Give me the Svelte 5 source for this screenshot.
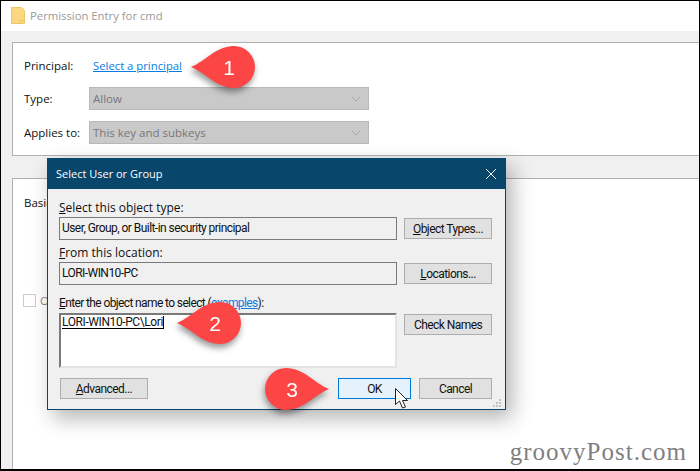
<script lang="ts">
  // Permission Entry dialog with the Select User or Group dialog over it.
  const callouts = [
    { n: 1, x: 190, y: 45, flip: false },
    { n: 2, x: 176, y: 301, flip: false },
    { n: 3, x: 264, y: 367, flip: true }
  ];
</script>

<div class="frame">
  <header class="titlebar">
    <svg class="folder" width="14" height="17" viewBox="0 0 14 17">
      <path d="M.5 .5h10l3 3v13H.5z" fill="#fbd87f" stroke="#ecc76c" />
      <path d="M9.500 16.500v-3h4" fill="none" stroke="#ecc76c" />
    </svg>
    <span>Permission Entry for cmd</span>
  </header>

  <main class="body">
    <section class="panel top">
      <div class="row first"><span class="lbl">Principal:</span><a href="#p">Select a principal</a></div>
      <div class="row"><span class="lbl">Type:</span><div class="combo">Allow{@render chevron()}</div></div>
      <div class="row"><span class="lbl">Applies to:</span><div class="combo">This key and subkeys{@render chevron()}</div></div>
    </section>
    <section class="panel lower">
      <div>Basic permissions:</div>
      <div class="check"><b></b>Only apply</div>
    </section>
  </main>

  <div class="dialog">
    <div class="dlg-title">
      <span>Select User or Group</span>
      <svg width="10" height="10" viewBox="0 0 10 10"><path d="M0 0l10 10M10 0L0 10" stroke="#fff" fill="none" /></svg>
    </div>
    <div class="dlg-body">
      <div class="fieldlbl"><u>S</u>elect this object type:</div>
      <div class="line">
        <div class="field">User, Group, or Built-in security principal</div>
        <button><u>O</u>bject Types...</button>
      </div>
      <div class="fieldlbl"><u>F</u>rom this location:</div>
      <div class="line second">
        <div class="field">LORI-WIN10-PC</div>
        <button><u>L</u>ocations...</button>
      </div>
      <div class="fieldlbl narrow"><u>E</u>nter the object name to select (<a href="#e">examples</a>):</div>
      <div class="line">
        <div class="area"><span class="typed">LORI-WIN10-PC\Lori</span></div>
        <button>Check Names</button>
      </div>
      <div class="actions">
        <button class="adv"><u>A</u>dvanced...</button>
        <button class="ok">OK</button>
        <button class="cancel">Cancel</button>
      </div>
    </div>
    <svg class="grip" width="9" height="8" viewBox="0 0 9 8" fill="#c4c4c4">
      <rect x="6" y="0" width="2" height="2" /><rect x="3" y="3" width="2" height="2" /><rect x="6" y="3" width="2" height="2" />
      <rect x="0" y="6" width="2" height="2" /><rect x="3" y="6" width="2" height="2" /><rect x="6" y="6" width="2" height="2" />
    </svg>
  </div>

  {#each callouts as c}
    <div class="callout" class:flip={c.flip} style="left: {c.x}px; top: {c.y}px">
      <svg width="64" height="42" viewBox="0 0 64 42">
        <path d="M0 21C15 15 25 0 43 0a21 21 0 0 1 0 42C25 42 15 27 0 21z" fill="#fc4646" />
      </svg>
      <span>{c.n}</span>
    </div>
  {/each}

  <svg class="cursor" width="13" height="21" viewBox="0 0 13 21">
    <path d="M.5 .5v16l4-3.500 3 7 3-1-3-6.500h5z" fill="#fff" stroke="#222" />
  </svg>

  <div class="brand">groovyPost.com</div>
</div>

{#snippet chevron()}
  <svg class="chev" width="10" height="6" viewBox="0 0 10 6"><path d="M1 1l4 4 4-4" fill="none" stroke="#aaa" /></svg>
{/snippet}

<style>
  :global(body) {
    margin: 0;
    background: #fff;
  }
  .frame {
    position: relative;
    width: 700px;
    height: 471px;
    box-sizing: border-box;
    border: 1px solid #000;
    border-bottom-width: 2px;
    overflow: hidden;
    font: 11.5px "Open Sans", "Liberation Sans", sans-serif;
    color: #111;
    background: #fff;
  }
  .titlebar {
    height: 30px;
    display: flex;
    align-items: center;
    gap: 5px;
    padding: 0 0 1px 10px;
    box-sizing: border-box;
    font-size: 11.3px;
    color: #999;
  }
  .body {
    background: #f0f0f0;
    height: 438px;
    padding: 11px 0 0 11px;
    box-sizing: border-box;
  }
  .panel {
    background: #fff;
    border: 1px solid #b0b0b0;
    border-right: 0;
    box-sizing: border-box;
  }
  .top {
    height: 114px;
    padding: 12px 0 0 11px;
    display: flex;
    flex-direction: column;
    gap: 11px;
    margin-bottom: 22px;
  }
  .row {
    display: flex;
    align-items: center;
    height: 23px;
  }
  .row.first {
    height: 21px;
  }
  .lbl {
    width: 65px;
  }
  .row a {
    color: #0a7ce0;
    padding-left: 4px;
    font-size: 11.3px;
  }
  .combo {
    width: 280px;
    height: 23px;
    box-sizing: border-box;
    background: #c9c9c9;
    border: 1px solid #b8b8b8;
    padding: 0 4px 0 3px;
    color: #777;
    display: flex;
    align-items: center;
    justify-content: space-between;
  }
  .chev {
    margin-right: 3px;
  }
  .lower {
    height: 300px;
    padding: 16px 0 0 11px;
    border-bottom: 0;
  }
  .check {
    margin-top: 83px;
    margin-left: -1px;
    display: flex;
    align-items: center;
    gap: 4px;
    color: #888;
  }
  .check b {
    width: 11px;
    height: 11px;
    border: 1px solid #ccc;
  }
  .dialog {
    position: absolute;
    left: 46px;
    top: 157px;
    width: 459px;
    height: 252px;
    box-sizing: border-box;
    border: 1px solid #08466b;
    border-top: 0;
    background: #f0f0f0;
    box-shadow: 6px 8px 20px rgba(0, 0, 0, 0.3);
  }
  .dlg-title {
    height: 31px;
    box-sizing: border-box;
    background: #08466b;
    color: #fff;
    display: flex;
    justify-content: space-between;
    align-items: center;
    padding: 0 10px 0 9px;
    margin: 0 -1px;
    font-size: 11px;
  }
  .dlg-body {
    padding: 9px 13px 0 11px;
  }
  .fieldlbl {
    height: 19px;
    line-height: 19px;
    font-size: 12px;
  }
  .fieldlbl.narrow {
    height: 20px;
    font: 12px/21px Roboto, sans-serif;
    letter-spacing: -0.62px;
  }
  .fieldlbl a {
    color: #0a7ce0;
  }
  .line {
    display: flex;
    justify-content: space-between;
    align-items: flex-start;
    margin-bottom: 3px;
  }
  .line.second {
    margin-bottom: 8px;
  }
  .field {
    width: 338px;
    height: 23px;
    box-sizing: border-box;
    border: 1px solid #7a7a7a;
    padding-left: 2px;
    font: 12px/21px Roboto, sans-serif;
    letter-spacing: -0.55px;
  }
  .area {
    width: 338px;
    height: 55px;
    box-sizing: border-box;
    border: 2px solid #7a7a7a;
    border-right: 2px solid #e4e4e4;
    border-bottom: 2px solid #e4e4e4;
    background: #fff;
    padding: 1px;
    font: 12px/12px Roboto, sans-serif;
    letter-spacing: -0.4px;
  }
  .typed {
    display: inline-block;
    border-bottom: 1px solid #000;
    border-right: 1px solid #000;
  }
  button {
    width: 88px;
    height: 21px;
    margin-top: 1px;
    box-sizing: border-box;
    background: #e1e1e1;
    border: 1px solid #adadad;
    font: 12px Roboto, sans-serif;
    letter-spacing: -0.55px;
    color: #111;
    padding: 0;
  }
  .actions {
    display: flex;
    gap: 8px;
    margin-top: 9px;
  }
  .adv {
    margin: 1px auto 0 1px;
  }
  .ok,
  .cancel {
    width: 73px;
  }
  .ok {
    background: #e5f1fb;
    border-color: #0078d7;
  }
  .grip {
    position: absolute;
    right: 3px;
    bottom: 2px;
  }
  .callout {
    position: absolute;
    width: 64px;
    height: 42px;
    filter: drop-shadow(-1px 4px 3px rgba(0, 0, 0, 0.4));
  }
  .callout svg {
    display: block;
  }
  .callout.flip svg {
    transform: scaleX(-1);
  }
  .callout span {
    position: absolute;
    left: 28px;
    top: 0;
    width: 20px;
    text-align: center;
    color: #fff;
    font: 21px/43px "Liberation Sans", sans-serif;
  }
  .callout.flip span {
    left: 17px;
  }
  .cursor {
    position: absolute;
    left: 394px;
    top: 387px;
  }
  .brand {
    position: absolute;
    right: 12px;
    bottom: 3px;
    font: 25px "Liberation Serif", serif;
    letter-spacing: 1px;
    color: #808080;
  }
</style>
